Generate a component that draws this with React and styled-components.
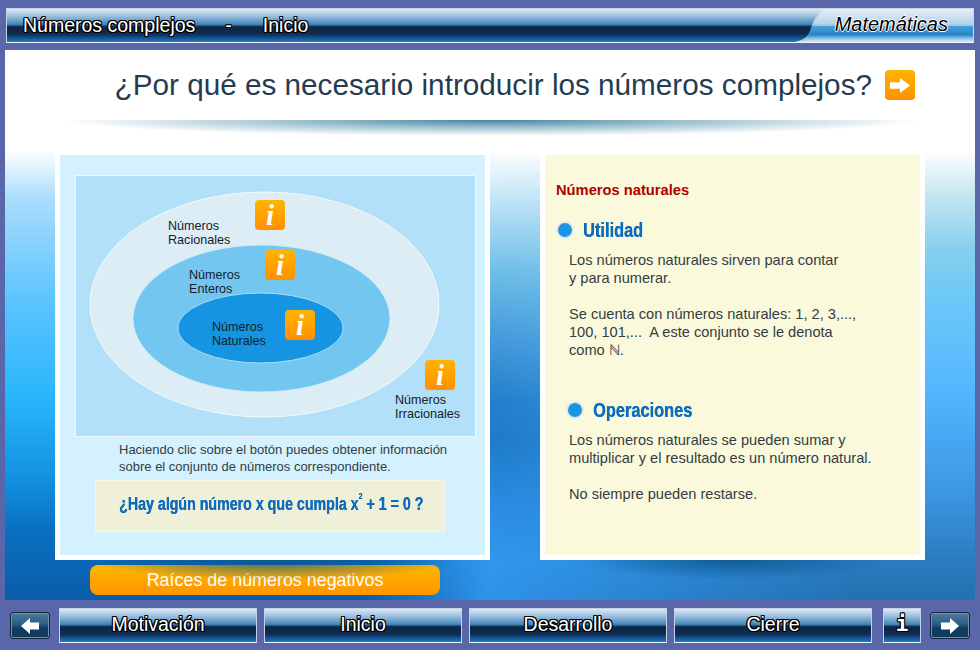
import styled, { createGlobalStyle } from 'styled-components';

const GlobalStyle = createGlobalStyle`
  html, body {
    margin: 0;
    padding: 0;
    background: #5a66aa;
  }
  * {
    box-sizing: border-box;
  }
`;

const glossy = `linear-gradient(to bottom,
  #dce8f8 0%, #a9c7e2 18%, #5f9ac6 38%, #3a7cae 49%, #14365c 51%, #0d2746 58%,
  #0f2c52 76%, #155392 88%, #1c74bc 97%)`;

const outline = `1px 0 0 #000, -1px 0 0 #000, 0 1px 0 #000, 0 -1px 0 #000,
  1px 1px 0 #000, -1px -1px 0 #000, 1px -1px 0 #000, -1px 1px 0 #000`;

const Page = styled.div`
  width: 980px;
  height: 650px;
  overflow: hidden;
  padding-top: 8px;
  background: #5a66aa;
  font-family: "Liberation Sans", Arial, sans-serif;
`;

const Header = styled.header`
  display: flex;
  align-items: center;
  height: 35px;
  margin: 0 6px 7px;
  padding-left: 16px;
  border: 1px solid #c9d3e4;
  border-bottom-color: #f2f6fb;
  background: ${glossy};
  position: relative;
  color: #fff;
  font-size: 19.5px;
  text-shadow: ${outline};
`;

const HeaderItem = styled.span`
  margin-left: ${(p) => p.$gap || 0}px;
`;

const SubjectTab = styled.div`
  position: absolute;
  top: 0;
  right: 0;
  bottom: 0;
  width: 178px;
  padding: 4px 25px 0 0;
  text-align: right;
  font-style: italic;
  font-size: 20px;
  color: #000;
  text-shadow: 1px 0 0 #fff, -1px 0 0 #fff, 0 1px 0 #fff, 0 -1px 0 #fff;
  background: linear-gradient(to bottom,
    #e6eff9 0%, #b6d2e8 45%, #9cc4e2 50%, #41a2d8 53%, #2a82c4 78%, #7fc0e4 88%, #d6e9f4 100%);
  clip-path: path('M0 33 C10 31 14 26 16 19 C19 10 24 2 33 0 L178 0 L178 33 Z');
`;

// the backdrop runs from white to blue, with its own colour curve at each side
const Main = styled.main`
  position: relative;
  isolation: isolate;
  display: flex;
  flex-direction: column;
  height: 550px;
  margin: 0 5px;
  background: linear-gradient(to bottom,
    #fff 0px, #fff 100px, #c0e4f8 150px, #70bfe8 220px, #4a9fdc 280px, #2480cc 350px,
    #1e7cc8 390px, #2a8ae0 450px, #2f98ee 510px, #2f92e8 550px);

  &::before,
  &::after {
    content: '';
    position: absolute;
    top: 0;
    bottom: 0;
    z-index: -1;
  }

  &::before {
    left: 0;
    width: 480px;
    background: linear-gradient(to bottom,
      #fff 0px, #fff 100px, #a8dcfb 150px, #5cc4ff 250px, #28b5fb 350px, #1290e0 430px,
      #0a70c0 480px, #0a5ca8 550px);
    mask-image: linear-gradient(to right, #000 75%, transparent 100%);
  }

  &::after {
    right: 0;
    width: 480px;
    background: linear-gradient(to bottom,
      #fff 0px, #fff 100px, #bfe3ef 150px, #85cfee 200px, #6cc8f8 250px, #58b8ff 330px,
      #4aaaf5 380px, #3a94de 450px, #2a7cc0 510px, #2470b0 550px);
    mask-image: linear-gradient(to left, #000 25%, transparent 100%);
  }
`;

const TitleRow = styled.div`
  display: flex;
  align-items: center;
  justify-content: flex-end;
  gap: 13px;
  height: 70px;
  padding: 0 60px 0 0;
`;

const Title = styled.h1`
  margin: 0;
  font-size: 29.7px;
  font-weight: 400;
  white-space: nowrap;
  color: #253c50;
`;

const OrangeSquare = styled.div`
  display: flex;
  align-items: center;
  justify-content: center;
  width: 30px;
  height: 30px;
  border-radius: 4px;
  background: linear-gradient(to bottom, #ffb400, #ff9000);
`;

const TitleShade = styled.div`
  height: 16px;
  margin: 0 55px 14px;
  background: radial-gradient(ellipse 50% 100% at 50% 0, rgba(60, 125, 155, 0.95) 0%, rgba(90, 150, 175, 0.6) 45%, rgba(255, 255, 255, 0) 100%);
`;

const Panels = styled.div`
  display: flex;
  align-items: flex-start;
  gap: 50px;
  padding-left: 50px;
`;

const LeftColumn = styled.div`
  display: flex;
  flex-direction: column;
  width: 435px;
`;

const Panel = styled.section`
  position: relative;
  height: 410px;
  border: 5px solid #fff;
  background: ${(p) => p.$bg};

  &::after {
    content: '';
    position: absolute;
    top: calc(100% + 5px);
    left: 30px;
    right: 30px;
    height: 20px;
    background: radial-gradient(ellipse 50% 100% at 50% 0, rgba(10, 85, 140, 0.85), rgba(10, 85, 140, 0));
  }
`;

const Diagram = styled.div`
  position: relative;
  width: 401px;
  height: 262px;
  margin: 20px 0 0 15px;
  border: 1px solid #eef8fd;
  background: #b1e0f8;
`;

const DiagramArt = styled.svg`
  display: block;
`;

const SetLabel = styled.div`
  position: absolute;
  left: ${(p) => p.$x}px;
  top: ${(p) => p.$y}px;
  font-size: 12.6px;
  line-height: 13.5px;
  color: #16202a;
`;

const InfoBadge = styled.div`
  position: absolute;
  left: ${(p) => p.$x}px;
  top: ${(p) => p.$y}px;
  width: 30px;
  height: 30px;
  border-radius: 4px;
  background: linear-gradient(to bottom, #ffb400, #ff9000);
  color: #fff;
  font: italic 700 29px/30px "Liberation Serif", serif;
  text-align: center;
`;

const Hint = styled.p`
  margin: 4px 0 0 59px;
  font-size: 13px;
  line-height: 17px;
  white-space: nowrap;
  color: #333d44;
`;

const QuestionBox = styled.div`
  display: flex;
  align-items: center;
  width: 350px;
  height: 52px;
  margin: 5px 0 0 35px;
  padding: 0 0 3px 23px;
  border: 1px solid #f6f6e6;
  background: #f0f0d8;
`;

const Narrow = styled.span`
  display: inline-block;
  white-space: nowrap;
  transform: scaleX(${(p) => p.$scale});
  transform-origin: left center;
  font-weight: 700;
  font-size: ${(p) => p.$size}px;
  color: #0e6cbc;
  text-shadow: 0.4px 0 0 #0e6cbc;

  sup {
    position: relative;
    top: -4px;
    font-size: 9px;
    line-height: 0;
  }
`;

const RootsButton = styled.button`
  width: 350px;
  height: 30px;
  margin: 5px 0 0 35px;
  border: 0;
  border-radius: 8px;
  background: linear-gradient(to bottom, #ffb800, #ff9400);
  color: #fff;
  font-family: inherit;
  font-size: 17.9px;
`;

const NotesPanel = styled(Panel)`
  width: 385px;
  padding: 25px 0 0 11px;
`;

const NotesTitle = styled.h2`
  margin: 0 0 18px;
  font-size: 14.7px;
  line-height: 20px;
  color: #b00000;
`;

const SectionHead = styled.div`
  display: flex;
  align-items: center;
  height: 24px;
  margin: 0 0 ${(p) => p.$after}px ${(p) => p.$indent || 0}px;
`;

const Bullet = styled.span`
  width: 18px;
  height: 18px;
  margin-right: 9px;
  border: 2.5px solid #e6e8ea;
  border-radius: 50%;
  background: #1b95e6;
`;

const Body = styled.p`
  margin: 0 0 ${(p) => p.$after || 0}px 13px;
  font-size: 14.6px;
  line-height: 18px;
  white-space: nowrap;
  color: #333d44;
`;

const Footer = styled.footer`
  display: flex;
  align-items: center;
  height: 35px;
  margin-top: 8px;
  padding-left: 10px;
`;

const NavArrow = styled.button`
  display: flex;
  align-items: center;
  justify-content: center;
  width: 40px;
  height: 27px;
  margin-left: ${(p) => p.$gap || 0}px;
  padding: 0;
  border: 1px solid #16263c;
  border-radius: 3px;
  box-shadow: inset 0 0 0 1px #6f93ad;
  background: linear-gradient(to bottom, #4e7999, #2b5d84 45%, #123d63 60%, #0f3a60);
`;

const NavButton = styled.button`
  width: ${(p) => p.$w || 198}px;
  height: 35px;
  margin-left: ${(p) => p.$gap || 7}px;
  padding: 0 0 3px;
  border: 1px solid #c5d2e4;
  border-bottom-color: #f0f5fb;
  background: ${glossy};
  color: #fff;
  font-family: ${(p) => (p.$mono ? '"DejaVu Sans Mono", monospace' : 'inherit')};
  font-weight: ${(p) => (p.$mono ? 700 : 400)};
  font-size: ${(p) => (p.$mono ? 21 : 19.5)}px;
  text-shadow: ${outline};
`;

const Arrow = ({ flip, width = 20, height = 15 }) => (
  <svg
    width={width}
    height={height}
    viewBox="0 0 20 16"
    preserveAspectRatio="none"
    style={flip ? { transform: 'scaleX(-1)' } : undefined}
  >
    <path d="M0 4.5H10V0L20 8L10 16V11.5H0Z" fill="#fff" />
  </svg>
);

const sets = [
  { x: 92, y: 44, lines: ['Números', 'Racionales'] },
  { x: 113, y: 93, lines: ['Números', 'Enteros'] },
  { x: 136, y: 145, lines: ['Números', 'Naturales'] },
  { x: 319, y: 218, lines: ['Números', 'Irracionales'] },
];

const badges = [
  { x: 179, y: 24 },
  { x: 189, y: 74 },
  { x: 209, y: 134 },
  { x: 349, y: 184 },
];

const sections = ['Motivación', 'Inicio', 'Desarrollo', 'Cierre'];

export default function App() {
  return (
    <Page>
      <GlobalStyle />
      <Header>
        <HeaderItem>Números complejos</HeaderItem>
        <HeaderItem $gap={30}>-</HeaderItem>
        <HeaderItem $gap={31}>Inicio</HeaderItem>
        <SubjectTab>Matemáticas</SubjectTab>
      </Header>

      <Main>
        <TitleRow>
          <Title>¿Por qué es necesario introducir los números complejos?</Title>
          <OrangeSquare>
            <Arrow />
          </OrangeSquare>
        </TitleRow>
        <TitleShade />

        <Panels>
          <LeftColumn>
            <Panel $bg="#d3f1fe">
              <Diagram>
                <DiagramArt width="399" height="260" viewBox="0 0 399 260">
                  <ellipse cx="188.5" cy="128.5" rx="174.5" ry="112.5" fill="#ddedf5" stroke="#f4fafd" />
                  <ellipse cx="185.5" cy="142.5" rx="128.5" ry="73.5" fill="#73c6ef" stroke="#cfeaf8" />
                  <ellipse cx="184.5" cy="152" rx="82.5" ry="35" fill="#1494e2" stroke="#a9dcf6" />
                </DiagramArt>
                {sets.map((s) => (
                  <SetLabel key={s.lines[1]} $x={s.x} $y={s.y}>
                    {s.lines[0]}
                    <br />
                    {s.lines[1]}
                  </SetLabel>
                ))}
                {badges.map((b) => (
                  <InfoBadge key={b.x} $x={b.x} $y={b.y}>
                    i
                  </InfoBadge>
                ))}
              </Diagram>
              <Hint>
                Haciendo clic sobre el botón puedes obtener información
                <br />
                sobre el conjunto de números correspondiente.
              </Hint>
              <QuestionBox>
                <Narrow $size={18} $scale={0.79}>
                  ¿Hay algún número x que cumpla x<sup>2</sup> + 1 = 0 ?
                </Narrow>
              </QuestionBox>
            </Panel>
            <RootsButton>Raíces de números negativos</RootsButton>
          </LeftColumn>

          <NotesPanel $bg="#fbf9db">
            <NotesTitle>Números naturales</NotesTitle>
            <SectionHead $after={9}>
              <Bullet />
              <Narrow $size={21} $scale={0.78}>Utilidad</Narrow>
            </SectionHead>
            <Body $after={18}>
              Los números naturales sirven para contar
              <br />y para numerar.
            </Body>
            <Body $after={39}>
              Se cuenta con números naturales: 1, 2, 3,...,
              <br />
              100, 101,...&nbsp; A este conjunto se le denota
              <br />
              como ℕ.
            </Body>
            <SectionHead $indent={10} $after={9}>
              <Bullet />
              <Narrow $size={21} $scale={0.78}>Operaciones</Narrow>
            </SectionHead>
            <Body $after={18}>
              Los números naturales se pueden sumar y
              <br />
              multiplicar y el resultado es un número natural.
            </Body>
            <Body>No siempre pueden restarse.</Body>
          </NotesPanel>
        </Panels>
      </Main>

      <Footer>
        <NavArrow aria-label="Anterior">
          <Arrow flip width={18} height={16} />
        </NavArrow>
        {sections.map((name, i) => (
          <NavButton key={name} $gap={i === 0 ? 9 : 7}>
            {name}
          </NavButton>
        ))}
        <NavButton $w={38} $gap={11} $mono>
          i
        </NavButton>
        <NavArrow $gap={9} aria-label="Siguiente">
          <Arrow width={18} height={16} />
        </NavArrow>
      </Footer>
    </Page>
  );
}
